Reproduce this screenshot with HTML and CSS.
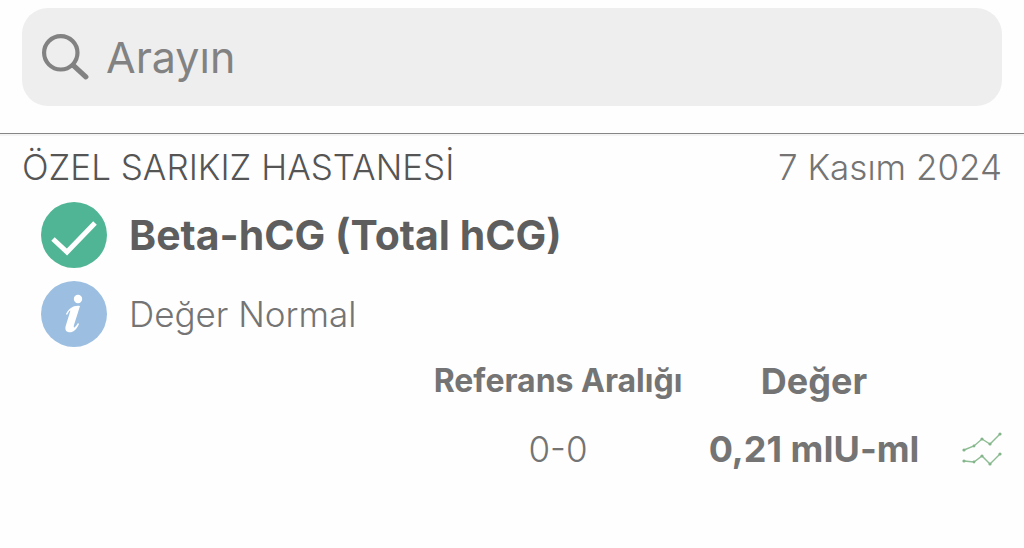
FILE: index.html
```html
<!DOCTYPE html>
<html lang="tr">
<head>
  <meta charset="UTF-8">
  <meta name="viewport" content="width=device-width, initial-scale=1.0">
  <title>Tahlil Sonuçları</title>
  <link rel="stylesheet" href="styles.css">
</head>
<body>

<header class="topbar">
  <label class="search">
    <svg class="search-icon" viewBox="0 0 46 46" fill="none" stroke="#828282" aria-hidden="true">
      <circle cx="18" cy="19" r="16" stroke-width="4"/>
      <path d="M30 31 42 42" stroke-width="5" stroke-linecap="round"/>
    </svg>
    <input type="search" placeholder="Arayın" aria-label="Arayın">
  </label>
</header>

<main class="result">
  <div class="result-head">
    <span class="hospital">ÖZEL SARIKIZ HASTANESİ</span>
    <time class="date" datetime="2024-11-07">7 Kasım 2024</time>
  </div>

  <div class="item">
    <svg class="badge" viewBox="0 0 66 66" aria-hidden="true">
      <circle cx="33" cy="33" r="33" fill="#50b594"/>
      <path d="M12 37 26 50 54 21" fill="none" stroke="#fff" stroke-width="5"/>
    </svg>
    <h1 class="test-name">Beta-hCG (Total hCG)</h1>
  </div>

  <div class="item">
    <svg class="badge" viewBox="0 0 66 66" aria-hidden="true">
      <circle cx="33" cy="33" r="33" fill="#9bbee1"/>
      <circle cx="37" cy="18" r="4.2" fill="#fff"/>
      <path d="M25 33C28 27 33 24 39 25L33 44C32 48 34 47 37 42L38 43C35 50 31 52 27 51C24 50 24 47 25 44L29 31C30 28 28 30 26 34Z" fill="#fff"/>
    </svg>
    <p class="status">Değer Normal</p>
  </div>

  <table class="values">
    <thead>
      <tr>
        <th class="range">Referans Aralığı</th>
        <th class="value">Değer</th>
        <td class="trend"></td>
      </tr>
    </thead>
    <tbody>
      <tr>
        <td class="range">0-0</td>
        <td class="value">0,21 mIU-ml</td>
        <td class="trend">
          <button type="button" aria-label="Grafik">
            <svg viewBox="0 0 40 36" fill="none" stroke="#8dbd93" stroke-width="1.4" aria-hidden="true">
              <path d="M2 19 12 15 20 8 28 13 38 3M2 30 12 31 20 25 28 33 38 23"/>
              <g fill="#84b58a" stroke="none">
                <circle cx="2" cy="19" r="1.6"/><circle cx="12" cy="15" r="1.4"/><circle cx="20" cy="8" r="1.6"/><circle cx="28" cy="13" r="1.6"/><circle cx="38" cy="3" r="1.6"/>
                <circle cx="2" cy="30" r="1.6"/><circle cx="12" cy="31" r="1.4"/><circle cx="20" cy="25" r="1.6"/><circle cx="28" cy="33" r="1.6"/><circle cx="38" cy="23" r="1.6"/>
              </g>
            </svg>
          </button>
        </td>
      </tr>
    </tbody>
  </table>
</main>

</body>
</html>
```
FILE: styles.css
```css
* {
  box-sizing: border-box;
}
body {
  margin: 0;
  background: #fefefe;
  color: #747474;
  font-family: Inter, "Liberation Sans", sans-serif;
  font-size: 35px;
  font-weight: 300;
}
.topbar {
  padding: 8px 22px 27px;
  border-bottom: 1px solid #868686;
  box-shadow: 0 2px 0 #f4f4f4;
}
.search {
  display: flex;
  align-items: center;
  gap: 16px;
  height: 98px;
  padding: 0 20px;
  border-radius: 26px;
  background: #eeeeee;
}
.search-icon {
  flex: none;
  width: 48px;
  height: 48px;
}
.search input {
  flex: 1;
  min-width: 0;
  padding: 0;
  border: none;
  outline: none;
  background: none;
  color: #828282;
  font: inherit;
  font-size: 43px;
  font-weight: 400;
}
.search input::placeholder {
  color: #828282;
  opacity: 1;
}
.result {
  padding: 12px 22px;
}
.result-head {
  display: flex;
  justify-content: space-between;
  line-height: 42px;
  margin-bottom: 14px;
}
.hospital {
  color: #555555;
}
.item {
  display: flex;
  align-items: center;
  gap: 22px;
  padding-left: 19px;
  margin-bottom: 13px;
}
.badge {
  flex: none;
  width: 66px;
  height: 66px;
}
.test-name {
  margin: 0;
  color: #5e5e5e;
  font-size: 41px;
  font-weight: 700;
}
.status {
  margin: 0;
}
.values {
  width: 100%;
  margin-top: -13px;
  border-collapse: collapse;
  line-height: 42px;
  white-space: nowrap;
}
.values th,
.values td {
  height: 68px;
  padding: 0;
  text-align: center;
}
.values th {
  font-size: 36px;
  font-weight: 700;
}
.values .range {
  padding-left: 400px;
}
.values th.range {
  font-size: 32px;
}
.values .value {
  width: 240px;
}
.values td.value {
  font-size: 36px;
  font-weight: 700;
}
.values .trend {
  width: 68px;
}
.trend button {
  display: block;
  margin-left: auto;
  padding: 0;
  border: none;
  background: none;
  cursor: pointer;
}
.trend svg {
  display: block;
  width: 40px;
  height: 36px;
}
```
